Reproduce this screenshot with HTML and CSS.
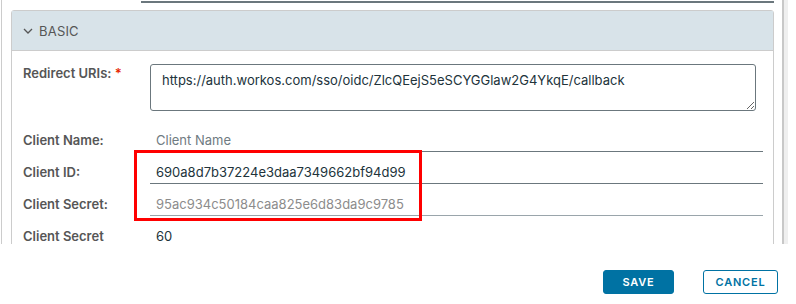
FILE: index.html
```html
<!DOCTYPE html>
<html lang="en">
<head>
    <meta charset="UTF-8">
    <title>OIDC Client - Basic</title>
    <link rel="stylesheet" href="styles.css">
</head>
<body>
    <div class="viewport">
        <div class="content">
            <div class="top-rule"></div>

            <div class="panel">
                <div class="panel-header">
                    <svg class="chevron" width="10" height="6" viewBox="0 0 10 6">
                        <path d="M1 1 L5 5 L9 1" fill="none" stroke="#565656" stroke-width="1.3"/>
                    </svg>
                    <span>BASIC</span>
                </div>

                <div class="panel-body">
                    <div class="form-row tall">
                        <label class="label">Redirect URIs: <span class="req">*</span></label>
                        <textarea class="textarea">https://auth.workos.com/sso/oidc/ZlcQEejS5eSCYGGlaw2G4YkqE/callback</textarea>
                    </div>

                    <div class="form-row">
                        <label class="label">Client Name:</label>
                        <input class="input" type="text" placeholder="Client Name">
                    </div>

                    <div class="highlight-wrap">
                        <div class="form-row">
                            <label class="label">Client ID:</label>
                            <input class="input" type="text" value="690a8d7b37224e3daa7349662bf94d99">
                        </div>

                        <div class="form-row">
                            <label class="label">Client Secret:</label>
                            <input class="input readonly" type="text" value="95ac934c50184caa825e6d83da9c9785" readonly>
                        </div>

                        <div class="highlight"></div>
                    </div>

                    <div class="form-row">
                        <label class="label">Client Secret</label>
                        <span class="plain-value">60</span>
                    </div>
                </div>
            </div>
        </div>
        <div class="scrollbar"></div>
    </div>

    <div class="footer">
        <button class="btn btn-primary">SAVE</button>
        <button class="btn btn-outline">CANCEL</button>
    </div>
</body>
</html>
```

FILE: styles.css
```css
* {
    margin: 0;
    padding: 0;
    box-sizing: border-box;
}

body {
    font-family: Inter, "Open Sans", sans-serif;
    font-size: 13px;
    color: #21333b;
    background: white;
    width: 796px;
    height: 304px;
    overflow: hidden;
}

.viewport {
    display: flex;
    height: 244px;
    overflow: hidden;
}

.content {
    width: 774px;
    margin-left: 1px;
    border-left: 1px solid #cccccc;
    padding-left: 9px;
}

.top-rule {
    margin-left: 130px;
    margin-right: 1px;
    margin-top: 1px;
    border-top: 2px solid #6b777d;
}

.panel {
    margin-top: 7px;
    width: 763px;
    border: 1px solid #cccccc;
    border-radius: 3px 3px 0 0;
    height: 300px;
}

.panel-header {
    height: 40px;
    background: #d8e3e9;
    border-bottom: 1px solid #cccccc;
    display: flex;
    align-items: center;
    padding-left: 11px;
    gap: 6px;
    color: #565656;
    font-size: 13px;
    letter-spacing: 0.2px;
}

.chevron {
    margin-top: 1px;
}

.panel-body {
    padding: 13px 9px 0 11px;
}

.form-row {
    display: flex;
    align-items: center;
    height: 24px;
    margin-bottom: 8px;
}

.form-row.tall {
    align-items: flex-start;
    height: 47px;
    margin-bottom: 17px;
}

.label {
    width: 127px;
    flex-shrink: 0;
    font-weight: 600;
    color: #565656;
}

.form-row.tall .label {
    padding-top: 1px;
}

.req {
    color: #e62700;
}

.textarea {
    width: 606px;
    height: 47px;
    border: 1px solid #6b777d;
    border-radius: 3px;
    padding: 5px 11px;
    font-family: inherit;
    font-size: 13px;
    color: #21333b;
    resize: vertical;
    line-height: 20px;
    overflow: hidden;
}

.input {
    width: 613px;
    height: 24px;
    border: none;
    border-bottom: 1px solid #6b777d;
    padding: 0 6px;
    font-family: inherit;
    font-size: 13px;
    color: #21333b;
    background: transparent;
    outline: none;
}

.input::placeholder {
    color: #6f7b82;
}

.input.readonly {
    color: #8c8c8c;
    border-bottom-color: #9aa5ab;
}

.plain-value {
    padding-left: 6px;
}

.highlight-wrap {
    position: relative;
}

.highlight {
    position: absolute;
    left: 111px;
    top: -10px;
    width: 288px;
    height: 71px;
    border: 3px solid #ff0000;
}

.scrollbar {
    width: 6px;
    margin-left: 7px;
    border-left: 2px solid #c8c8c8;
    background: #efefef;
}

.footer {
    display: flex;
    justify-content: flex-end;
    gap: 29px;
    padding: 26px 18px 0 0;
}

.btn {
    height: 24px;
    border-radius: 3px;
    font-family: inherit;
    font-size: 11px;
    font-weight: 600;
    letter-spacing: 0.8px;
    cursor: pointer;
}

.btn-primary {
    width: 71px;
    background: #0072a3;
    border: 1px solid #0072a3;
    color: white;
}

.btn-outline {
    width: 75px;
    background: white;
    border: 1px solid #0072a3;
    color: #0072a3;
}
```
